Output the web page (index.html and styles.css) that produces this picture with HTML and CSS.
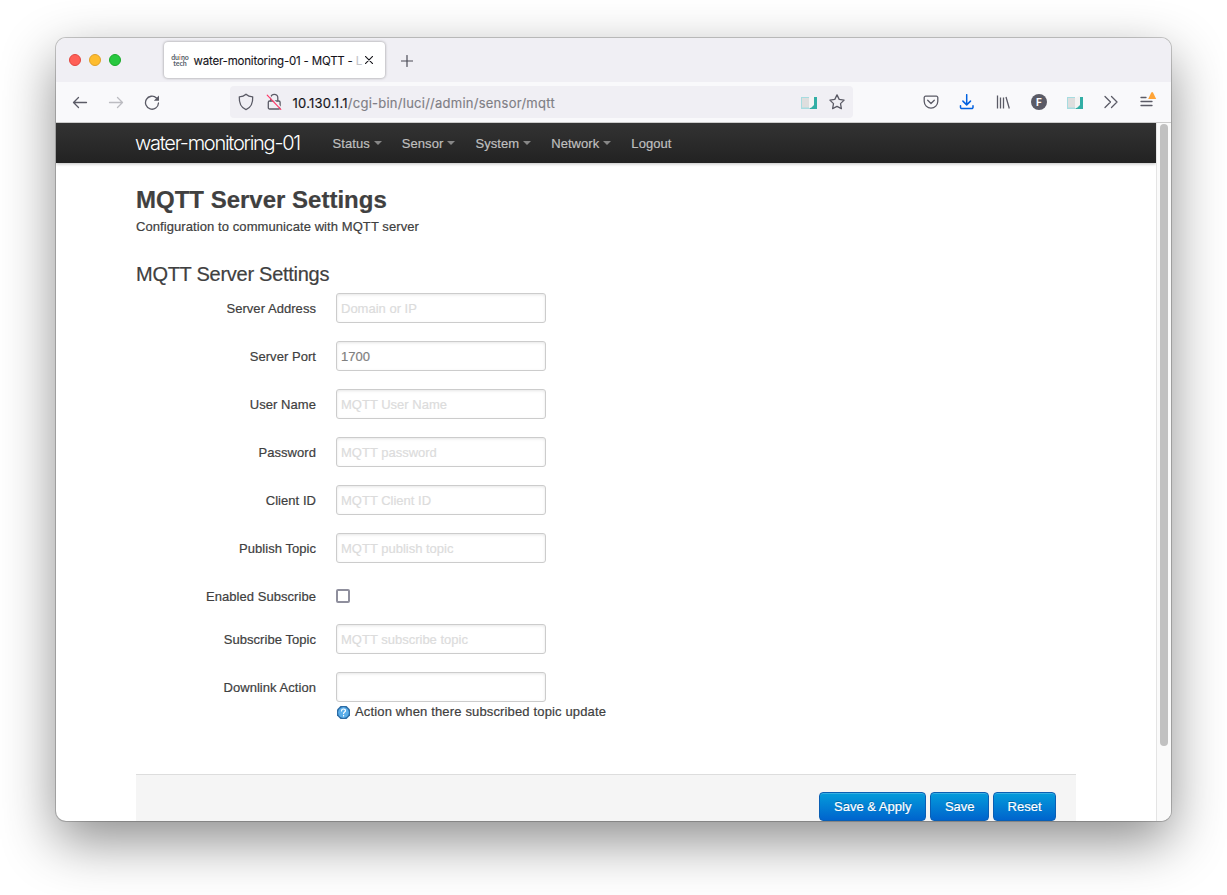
FILE: index.html
```html
<!DOCTYPE html>
<html lang="en">
<head>
<meta charset="utf-8">
<title>water-monitoring-01 - MQTT - LuCI</title>
<link rel="stylesheet" href="styles.css">
</head>
<body>
<div class="window">
  <div class="tabstrip">
    <div class="lights"><i class="light red"></i><i class="light amber"></i><i class="light green"></i></div>
    <div class="tab">
      <div class="favicon"><span>du<b>i</b>no</span><span>tech</span></div>
      <span class="tab-title">water-monitoring-01 - MQTT - <span class="fade">L</span></span>
      <svg class="tab-close" width="8" height="8" viewBox="0 0 8 8"><path d="M.4.4l7.2 7.2M7.6.4L.4 7.6"/></svg>
    </div>
    <svg class="new-tab" width="12" height="12" viewBox="0 0 12 12"><path d="M6 .5v11M.5 6h11"/></svg>
  </div>
  <div class="toolbar">
    <div class="nav-icons">
      <svg width="16" height="16" viewBox="0 0 16 16"><path d="M14.500 8.500H1.500M6.500 3.500l-5 5 5 5"/></svg>
      <svg class="faded" width="16" height="16" viewBox="0 0 16 16"><path d="M1.500 8.500h13M9.500 3.500l5 5-5 5"/></svg>
      <svg width="16" height="16" viewBox="0 0 16 16"><path d="M14.500 9A6.500 6.500 0 1 1 12.500 4"/><path class="solid" d="M15 1.500v5.200H9.800z"/></svg>
    </div>
    <div class="urlbar">
      <svg width="16" height="18" viewBox="0 0 16 18"><path d="M8 1.300C6.500 2.700 4 3.700 1.300 3.900 1 9.500 2.500 14.500 8 16.600c5.500-2.100 7-7.100 6.700-12.700C12 3.700 9.500 2.700 8 1.300z"/></svg>
      <svg class="lock" width="16" height="18" viewBox="0 0 16 18"><path d="M4.800 8.300V4.800a3.500 3.500 0 0 1 7 0v3.500M3.600 8h9.200a1.300 1.300 0 0 1 1.300 1.300v5.400a1.300 1.300 0 0 1-1.300 1.300H3.600a1.300 1.300 0 0 1-1.300-1.300V9.300A1.300 1.300 0 0 1 3.600 8z"/><path class="halo" d="M2.200 1.300l13.400 14"/><path class="slash" d="M1.200 2.200l13.600 14.200"/></svg>
      <span class="url"><b>10.130.1.1</b>/cgi-bin/luci//admin/sensor/mqtt</span>
      <svg class="reader" width="16" height="14" viewBox="0 0 16 14"><path class="page-blue" d="M0 2h8v12H0z"/><path class="page-grey" d="M1 3h7v9.500H1z"/><path class="page-teal" d="M8 14l5-4V2h3v12z"/><path class="page-light" d="M8 3l5-2.500v9L10.500 12.500H8z"/></svg>
      <svg class="star" width="16" height="16" viewBox="0 0 16 16"><path d="M8 .9l2.200 4.500 4.900.7-3.600 3.500.9 5L8 12.300l-4.400 2.300.9-5L.9 6.100l4.900-.7z"/></svg>
    </div>
    <div class="actions">
      <svg width="16" height="16" viewBox="0 0 16 16"><path d="M2.600 2.200h10.800a1.400 1.400 0 0 1 1.400 1.400V7.300a6.800 6.800 0 0 1-13.600 0V3.600a1.400 1.400 0 0 1 1.400-1.400z"/><path d="M4.700 6.300L8 9.500l3.300-3.200"/></svg>
      <svg class="download" width="16" height="16" viewBox="0 0 16 16"><path d="M7.700.7v10M3.900 7.100l3.800 3.800 3.800-3.800M1.500 11.800v1.500a1.300 1.300 0 0 0 1.300 1.300h9.900a1.300 1.300 0 0 0 1.300-1.300v-1.500"/></svg>
      <svg class="library" width="16" height="16" viewBox="0 0 16 16"><path d="M2.500 1.500v13M5.500 3.500v11M8.500 3.500v11M11 3l3.300 11.500"/></svg>
      <span class="avatar">F</span>
      <svg class="ext" width="16" height="14" viewBox="0 0 16 14"><path class="page-blue" d="M0 2h8v12H0z"/><path class="page-grey" d="M1 3h7v9.500H1z"/><path class="page-teal" d="M8 14l5-4V2h3v12z"/><path class="page-light" d="M8 3l5-2.500v9L10.500 12.500H8z"/></svg>
      <svg width="16" height="16" viewBox="0 0 16 16"><path d="M2 2.500L7.500 8 2 13.500M8.500 2.500L14 8l-5.500 5.500"/></svg>
      <svg class="menu" width="18" height="18" viewBox="0 0 18 18"><path d="M2 6.500h5M2 10.500h11M2 14.500h11"/><path class="alert" d="M12.300 1.500L9.200 8h8L14 1.500q-.8-1-1.700 0z"/></svg>
    </div>
  </div>
  <div class="viewport">
    <div class="page">
      <header class="navbar">
        <a class="brand">water-monitoring-01</a>
        <nav class="menu-list">
          <a class="drop">Status</a><a class="drop">Sensor</a><a class="drop">System</a><a class="drop">Network</a><a>Logout</a>
        </nav>
      </header>
      <main class="content">
        <h2>MQTT Server Settings</h2>
        <p class="descr">Configuration to communicate with MQTT server</p>
        <h3>MQTT Server Settings</h3>
        <form class="form">
          <div class="row"><label>Server Address</label><input type="text" placeholder="Domain or IP"></div>
          <div class="row"><label>Server Port</label><input type="text" value="1700"></div>
          <div class="row"><label>User Name</label><input type="text" placeholder="MQTT User Name"></div>
          <div class="row"><label>Password</label><input type="text" placeholder="MQTT password"></div>
          <div class="row"><label>Client ID</label><input type="text" placeholder="MQTT Client ID"></div>
          <div class="row"><label>Publish Topic</label><input type="text" placeholder="MQTT publish topic"></div>
          <div class="row check"><label>Enabled Subscribe</label><span class="checkbox"></span></div>
          <div class="row"><label>Subscribe Topic</label><input type="text" placeholder="MQTT subscribe topic"></div>
          <div class="row last"><label>Downlink Action</label><input type="text"></div>
          <div class="hint"><svg width="15" height="15" viewBox="0 0 15 15"><path class="ring" d="M4.500 1h6L14 4.500v6L10.500 14h-6L1 10.500v-6z"/><circle class="disc" cx="7.500" cy="7.500" r="5.400"/><path class="q" d="M5.500 5.900c.1-2.600 4.200-2.400 4 0-.1 1.200-1.800 1.200-1.900 2.600M7.600 10.400v.6"/></svg><span>Action when there subscribed topic update</span></div>
        </form>
        <div class="page-actions">
          <button>Save &amp; Apply</button><button>Save</button><button>Reset</button>
        </div>
      </main>
    </div>
    <div class="scrollbar"><div class="thumb"></div></div>
  </div>
</div>
</body>
</html>
```
FILE: styles.css
```css
* { box-sizing: border-box; }
html, body { margin: 0; height: 100%; overflow: hidden; }
body { background: #fff; padding: 38px 56px 0; font: 13px/18px "Liberation Sans", Arial, sans-serif; color: #404040; }
svg { display: block; flex: none; fill: none; stroke: #5b5b66; stroke-width: 1.3; stroke-linecap: round; stroke-linejoin: round; }

.window { width: 1115px; height: 783px; border-radius: 10px; overflow: hidden; display: flex; flex-direction: column; background: #fff; box-shadow: 0 0 0 1px rgba(0,0,0,.2), 0 20px 54px rgba(0,0,0,.45); }

.tabstrip { height: 44px; flex: none; background: #f0eff4; display: flex; align-items: center; }
.lights { display: flex; gap: 8px; padding-left: 13px; width: 108px; }
.light { width: 12px; height: 12px; border-radius: 50%; }
.red { background: #ff5f57; border: 1px solid #e2463f; }
.amber { background: #febc2e; border: 1px solid #e0a028; }
.green { background: #28c840; border: 1px solid #1aab29; }
.tab { width: 221px; height: 36px; border-radius: 4px; background: #fff; box-shadow: 0 0 3px rgba(0,0,0,.4); display: flex; align-items: center; padding: 0 12px 0 7px; }
.favicon { width: 18px; display: flex; flex-direction: column; align-items: center; font: bold 7px/6px Lato, sans-serif; color: #56616a; }
.favicon b { color: #e59a63; }
.tab-title { width: 170px; flex: none; margin: 2px 0 0 4.500px; white-space: nowrap; font: 11.500px/16px Inter, sans-serif; letter-spacing: -.2px; color: #15141a; -webkit-text-stroke: .1px; }
.fade { color: #c4c4c8; }
.tab-close { stroke: #15141a; stroke-width: 1.1; margin-left: 1.500px; }
.new-tab { margin: 2px 0 0 16px; stroke: #4a4a55; stroke-width: 1.2; }

.toolbar { height: 41px; flex: none; background: #f9f9fb; border-bottom: 1px solid #ccc; display: flex; align-items: center; }
.nav-icons { display: flex; gap: 20px; padding-left: 16px; width: 174px; }
.faded { stroke: #bcbcc1; }
.solid { fill: #5b5b66; stroke: none; }
.urlbar { width: 623px; height: 32px; border-radius: 4px; background: #f0eff4; display: flex; align-items: center; padding: 0 8px; }
.lock { margin-left: 12px; }
.halo { stroke: #f0eff4; stroke-width: 1.2; }
.slash { stroke: #ff3b6b; stroke-width: 1.2; }
.url { flex: 1; margin: 2px 0 0 10.500px; font: 13px/18px Inter, sans-serif; letter-spacing: .25px; color: #7f7e85; -webkit-text-stroke: .15px; }
.url b { font-weight: 400; color: #15141a; }
.star { margin-left: 12px; }
.page-blue { fill: #a7dce0; stroke: none; }
.page-grey { fill: #dedede; stroke: none; }
.page-light { fill: #f3f3f3; stroke: none; }
.page-teal { fill: #32aea5; stroke: none; }
.actions { display: flex; align-items: center; gap: 20px; margin-left: 70px; }
.download { stroke: #0061e0; stroke-width: 1.5; }
.library { stroke-linecap: butt; }
.avatar { width: 16px; height: 16px; border-radius: 50%; background: #5b5b66; color: #fff; font: bold 10px/16px Inter, sans-serif; text-align: center; }
.menu { margin-top: -4px; stroke-width: 1.300; }
.alert { fill: #ffa436; stroke: none; }

.viewport { flex: 1; min-height: 0; display: flex; }
.page { width: 1100px; overflow: hidden; -webkit-text-stroke: .2px; }
.scrollbar { width: 15px; background: #fafafa; border-left: 1px solid #e4e4e4; padding: 1px 0 0 3px; }
.thumb { width: 8px; height: 622px; border-radius: 4px; background: #c1c1c1; }

.navbar { height: 40px; padding-left: 79px; display: flex; align-items: center; background: linear-gradient(#333, #222); box-shadow: 0 1px 3px rgba(0,0,0,.25); }
.brand { width: 188px; font: 300 20px/24px Inter, sans-serif; letter-spacing: -1.25px; color: #fff; white-space: nowrap; -webkit-text-stroke: 0; }
.menu-list { display: flex; color: #bfbfbf; padding-top: 1px; }
.menu-list a { padding: 0 10px; white-space: nowrap; letter-spacing: .07px; }
.menu-list a:first-child { padding-left: 9.500px; }
.drop::after { content: ""; display: inline-block; margin: 0 0 3px 4px; border: 4px solid transparent; border-top-color: #878787; border-bottom: 0; vertical-align: middle; }

.content { width: 940px; margin-left: 80px; padding-top: 19px; }
h2 { margin: 0; font-size: 24px; line-height: 36px; }
.descr { margin: 0; letter-spacing: .08px; }
h3 { margin: 20px 0 0; font-size: 20px; line-height: 36px; font-weight: 400; height: 37px; letter-spacing: -.27px; }
.row { display: flex; height: 48px; }
.row label { width: 180px; text-align: right; line-height: 18px; padding-top: 7px; margin-right: 20px; letter-spacing: .05px; }
.row input { width: 210px; height: 30px; padding: 4px; border: 1px solid #ccc; border-radius: 3px; font: inherit; color: #808080; outline: 0; box-shadow: inset 0 1px 3px rgba(0,0,0,.1); -webkit-text-stroke: .2px; }
.row input::placeholder { color: #dcdcdc; opacity: 1; }
.check { height: 43px; }
.checkbox { width: 14px; height: 14px; margin-top: 8px; border: 2px solid #8f8f9d; border-radius: 2px; }
.row.last { height: 30px; }
.hint { display: flex; align-items: center; height: 20px; padding-left: 200px; gap: 4px; letter-spacing: .15px; }
.ring { fill: #2c6ca5; stroke: none; }
.disc { fill: #5aaeea; stroke: none; }
.q { stroke: #fff; stroke-width: 1.2; }
.page-actions { height: 70px; margin-top: 52px; border-top: 1px solid #ddd; background: #f5f5f5; display: flex; justify-content: flex-end; gap: 4px; padding: 17px 20px; }
button { height: 29px; padding: 0 13.500px; border: 1px solid #0a5fb4; border-radius: 4px; background: linear-gradient(#049cdb, #0064cd); color: #fff; font: 13px/18px "Liberation Sans", Arial, sans-serif; text-shadow: 0 -1px 0 rgba(0,0,0,.25); box-shadow: inset 0 1px 0 rgba(255,255,255,.2); white-space: nowrap; -webkit-text-stroke: .2px; }
button:first-child { padding: 0 14px; }
```
